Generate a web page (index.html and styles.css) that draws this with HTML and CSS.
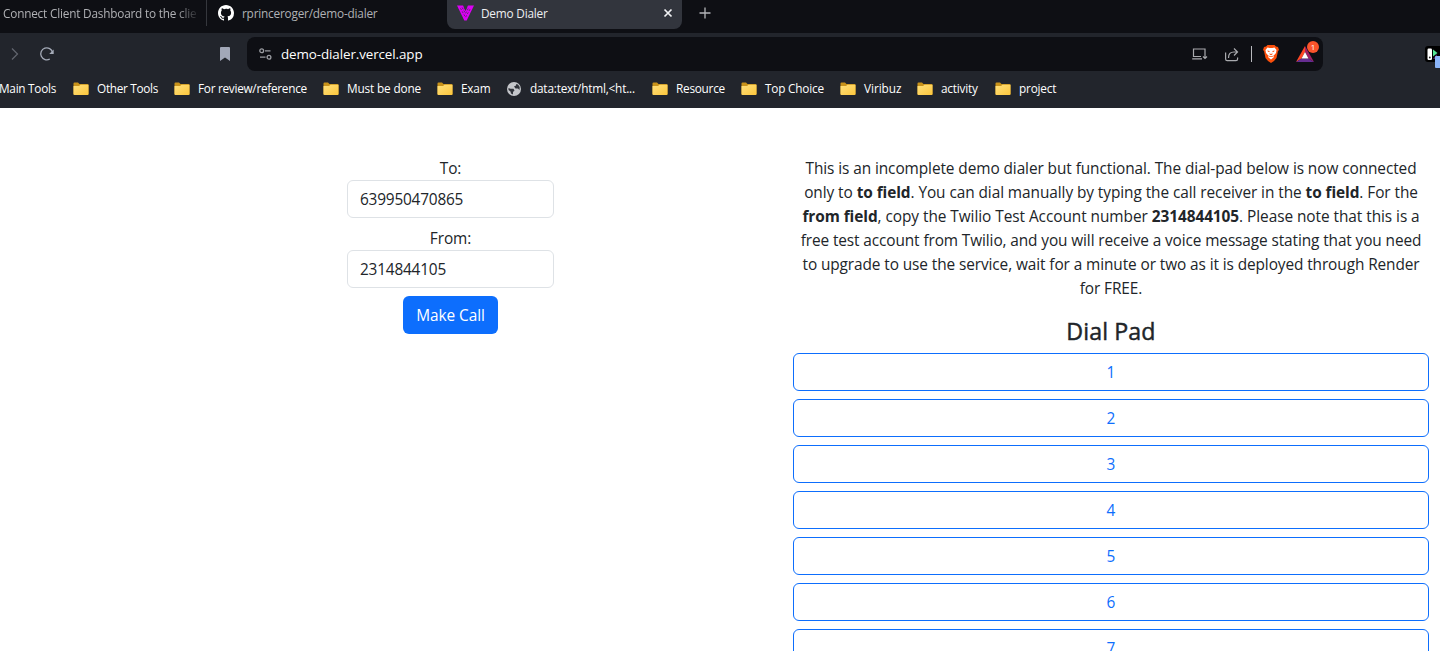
FILE: index.html
```html
<!DOCTYPE html>
<html lang="en">
<head>
<meta charset="utf-8">
<title>Demo Dialer</title>
<link rel="stylesheet" href="styles.css">
</head>
<body>
<svg class="defs" width="0" height="0">
  <defs>
    <linearGradient id="gold" x1="0" y1="0" x2="1" y2="1"><stop offset="0" stop-color="#ffe07c"/><stop offset="1" stop-color="#fcc63c"/></linearGradient>
    <symbol id="folder" viewBox="0 0 16 14"><path d="M.5 1.500Q.5.5 1.500.5H5L6.500 2H14.500Q15.500 2 15.500 3V12.500H.5Z" fill="#c8921a"/><path d="M.5 4H6L7.500 2.800H15.500V12Q15.500 13 14.500 13H1.500Q.5 13 .5 12Z" fill="url(#gold)"/></symbol>
  </defs>
</svg>
<header class="browser">
  <div class="tabs">
    <div class="tab tab-first"><span class="t-connect">Connect Client Dashboard to the clie</span></div>
    <div class="tab tab-github">
      <svg width="16" height="16" viewBox="0 0 16 16"><path fill="#fff" d="M8 0C3.580 0 0 3.580 0 8c0 3.540 2.290 6.530 5.470 7.590.4.070.55-.17.55-.38 0-.19-.01-.82-.01-1.490-2.010.37-2.530-.49-2.690-.94-.09-.23-.48-.94-.82-1.130-.28-.15-.68-.52-.01-.53.63-.01 1.080.58 1.230.82.72 1.210 1.870.87 2.330.66.070-.52.28-.87.510-1.070-1.780-.2-3.640-.89-3.640-3.950 0-.87.310-1.590.82-2.150-.08-.2-.36-1.020.08-2.120 0 0 .67-.21 2.200.82A7.600 7.600 0 0 1 8 3.860c.68 0 1.360.09 2 .27 1.530-1.040 2.200-.82 2.200-.82.44 1.100.16 1.920.08 2.120.51.56.82 1.270.82 2.150 0 3.070-1.870 3.750-3.650 3.950.29.25.54.73.54 1.480 0 1.070-.01 1.930-.01 2.200 0 .21.150.46.55.38A8.010 8.010 0 0 0 16 8c0-4.420-3.580-8-8-8Z"/></svg>
      <span class="t-github">rprinceroger/demo-dialer</span>
    </div>
    <div class="tab tab-active">
      <svg width="17" height="16" viewBox="0 0 17 16"><path d="M0 .5H17L9.700 15.500H7.300Z" fill="#dc00f5"/><path d="M6 0 7.200 3.500 8.500 6 9.800 3.500 11 0Z" fill="#32353d"/><path d="M3.500 3.300 8.500 12.300 13.500 3.300M5.200 2.500 8.500 8.500 11.800 2.500" fill="none" stroke="#32353d" stroke-width=".7" stroke-dasharray="2 1.500"/></svg>
      <span class="t-demo">Demo Dialer</span>
      <svg class="close" width="10" height="10" viewBox="0 0 10 10"><path d="M1.500 1.500 8.500 8.500M8.500 1.500 1.500 8.500" stroke="#f0f1f3" stroke-width="1.700"/></svg>
    </div>
    <svg class="plus" width="12" height="12" viewBox="0 0 12 12"><path d="M6 .5V11.500M.5 6H11.500" stroke="#b4b5b9" stroke-width="1.300"/></svg>
  </div>
  <div class="toolbar">
    <svg class="forward" width="8" height="14" viewBox="0 0 8 14"><path d="M1 1.500 6.500 7 1 12.500" fill="none" stroke="#62666f" stroke-width="1.200"/></svg>
    <svg class="reload" width="16" height="16" viewBox="0 0 16 16"><path d="M10.800 13A6 6 0 1 1 13.600 6.500" fill="none" stroke="#a5abb8" stroke-width="1.300"/><path d="M14.700 3.500V8H10.200Z" fill="#a5abb8"/></svg>
    <svg class="saved" width="10" height="14" viewBox="0 0 10 14"><path d="M0 1Q0 0 1 0H9Q10 0 10 1V14L5 10.500 0 14Z" fill="#a2a8b8"/></svg>
    <div class="address">
      <svg class="tune" width="13" height="12" viewBox="0 0 13 12" fill="none" stroke="#9b9da2" stroke-width="1.300"><circle cx="2.700" cy="2.800" r="1.900"/><path d="M6 2.800H11.500M1 9.200H6.500"/><circle cx="10" cy="9.200" r="1.900"/></svg>
      <span class="url">demo-dialer.vercel.app</span>
      <div class="actions">
        <svg width="16" height="12" viewBox="0 0 16 12" fill="none" stroke="#a9aaae" stroke-width="1.200"><path d="M13 5V1H1.500V8.500H9M.2 10.800H10M13 5V10.500M11 8.500 13 10.500 15 8.500"/></svg>
        <svg class="share" width="15" height="15" viewBox="0 0 15 15" fill="none" stroke="#a9aaae" stroke-width="1.200"><path d="M1.600 5.500V12Q1.600 13.600 3.200 13.600H12Q13.600 13.600 13.600 12V10.500M4.500 11Q4.500 5 10 5H13.500M10 1.500 13.500 5 10 8.500"/></svg>
        <i class="rule"></i>
        <svg class="brave" width="16" height="18" viewBox="0 0 16 18"><path d="M4.500 0H11.500L13 1.500 15 2 16 5 15 6 13.500 13 11 16 8 18 5 16 2.500 13 1 6 0 5 1 2 3 1.500Z" fill="#fb4f0b"/><path d="M4.500 2.500 6.500 3H9.500L11.500 2.500 13.500 5 13 8 11 10.300 11 12 8 14.500 5 12 5 10.300 3 8 2.500 5Z" fill="#fff"/><path d="M4.300 5.500 6.500 6V7L5 6.800ZM11.700 5.500 9.500 6V7L11 6.800ZM7 7.500 6.500 9.300 8 10.300 9.500 9.300 9 7.500 8.700 9H7.300ZM5 10.500 8 11.300 11 10.500V11.200L8 12.100 5 11.200Z" fill="#fb4f0b"/></svg>
        <div class="rewards">
          <svg width="18" height="16" viewBox="0 0 18 16"><path d="M9 0 0 16 5.500 12.500 9 6Z" fill="#ff4724"/><path d="M9 0 18 16 12.500 12.500 9 6Z" fill="#9e1f63"/><path d="M0 16H18L12.500 12.500H5.500Z" fill="#662d91"/><path d="M9 6 5.500 12.500H12.500Z" fill="#fff"/></svg>
          <b class="badge">1</b>
        </div>
      </div>
    </div>
    <svg class="extension" width="15" height="22" viewBox="0 0 15 22"><rect width="18" height="16" rx="3" fill="#000"/><rect x="2.500" y="2.500" width="4.500" height="11.500" rx="1.200" fill="#fff"/><circle cx="4.800" cy="11.500" r=".9" fill="#222"/><path d="M8 3.500 12.500 7 8 10.500Z" fill="#54e596"/><path d="M8 13 12 8V13Z" fill="#51206c"/><rect x="10" y="10" width="8" height="12" rx="1" fill="#8ab4f8"/></svg>
  </div>
  <nav class="bookmarks">
    <a class="mark"><span class="b-main">Main Tools</span></a>
    <a class="mark"><svg><use href="#folder"/></svg><span class="b-other">Other Tools</span></a>
    <a class="mark"><svg><use href="#folder"/></svg><span class="b-review">For review/reference</span></a>
    <a class="mark"><svg><use href="#folder"/></svg><span class="b-must">Must be done</span></a>
    <a class="mark"><svg><use href="#folder"/></svg><span class="b-exam">Exam</span></a>
    <a class="mark"><svg class="globe" viewBox="0 0 16 16"><circle cx="8" cy="8" r="7" fill="#c4c6ca"/><path d="M2.500 7 4.500 7.800H7.500L8.500 9.500 7 11V13.500L5 12.500 4.500 10.500 2.500 9ZM8 2.500 10 3V4.500L8 5.500 9.500 7.500H12L13.500 9 13.700 6 12 3.500Z" fill="#30333a"/></svg><span class="b-data">data:text/html,&lt;ht...</span></a>
    <a class="mark"><svg><use href="#folder"/></svg><span class="b-resource">Resource</span></a>
    <a class="mark"><svg><use href="#folder"/></svg><span class="b-top">Top Choice</span></a>
    <a class="mark"><svg><use href="#folder"/></svg><span class="b-viribuz">Viribuz</span></a>
    <a class="mark"><svg><use href="#folder"/></svg><span class="b-activity">activity</span></a>
    <a class="mark"><svg><use href="#folder"/></svg><span class="b-project">project</span></a>
  </nav>
</header>
<main class="page">
  <form class="call-form">
    <label for="to">To:</label>
    <input id="to" class="field" type="text" value="639950470865">
    <label for="from">From:</label>
    <input id="from" class="field" type="text" value="2314844105">
    <button class="call" type="button">Make Call</button>
  </form>
  <section class="dialer">
    <p class="intro">
      <span class="line l1">This is an incomplete demo dialer but functional. The dial-pad below is now connected</span>
      <span class="line l2">only to <b>to field</b>. You can dial manually by typing the call receiver in the <b>to field</b>. For the</span>
      <span class="line l3"><b>from field</b>, copy the Twilio Test Account number <b>2314844105</b>. Please note that this is a</span>
      <span class="line l4">free test account from Twilio, and you will receive a voice message stating that you need</span>
      <span class="line l5">to upgrade to use the service, wait for a minute or two as it is deployed through Render</span>
      <span class="line l6">for FREE.</span>
    </p>
    <h4 class="heading">Dial Pad</h4>
    <div class="pad">
      <button class="key" type="button">1</button>
      <button class="key" type="button">2</button>
      <button class="key" type="button">3</button>
      <button class="key" type="button">4</button>
      <button class="key" type="button">5</button>
      <button class="key" type="button">6</button>
      <button class="key" type="button">7</button>
    </div>
  </section>
</main>
</body>
</html>
```

FILE: styles.css
```css
* { box-sizing: border-box; }
body { margin: 0; height: 651px; overflow: hidden; background: #fff; color: #212529; font: 15.4px/24px "Open Sans", "Noto Sans", sans-serif; letter-spacing: -.1px; }
svg { display: block; flex: none; }
.defs { position: absolute; }
.browser { height: 108px; background: #22252c; font-size: 11.8px; letter-spacing: -.2px; white-space: nowrap; overflow: hidden; }

.tabs { display: flex; height: 33px; background: #0e0f14; color: #b0b1b5; }
.tab { display: flex; align-items: center; height: 26px; }
.tab span { padding-bottom: 1px; }
.tab-first { width: 207px; padding-left: 3px; border-right: 1px solid #35373d; }
.tab-first span { width: 197px; letter-spacing: -.2px; -webkit-mask-image: linear-gradient(90deg, #000 88%, transparent 100%); mask-image: linear-gradient(90deg, #000 88%, transparent 100%); }
.tab-github { width: 240px; padding-left: 11px; gap: 8px; }
.tab-active { width: 235px; height: 29px; padding: 0 9px 3px 10px; gap: 7px; background: #32353d; border-radius: 0 0 8px 8px; color: #eeeff1; }
.close { margin-left: auto; }
.plus { margin: 7px 0 0 17px; }

.toolbar { display: flex; align-items: center; height: 42px; }
.forward { margin-left: 11px; }
.reload { margin-left: 20px; }
.saved { margin-left: 165px; }
.address { display: flex; align-items: center; width: 1076px; height: 34px; margin-left: 17px; padding: 0 9px 0 12px; border-radius: 8px; background: #0e0f14; color: #fff; font-size: 13.4px; }
.url { margin-left: 9px; letter-spacing: -.1px; }
.actions { display: flex; align-items: center; margin-left: auto; }
.share { margin-left: 16px; }
.rule { width: 1px; height: 16px; margin: 0 11px 0 12px; background: #b8b9bd; }
.rewards { position: relative; margin-left: 17px; }
.badge { position: absolute; left: 11px; top: -5px; width: 12px; height: 12px; border-radius: 50%; background: #fb542b; font: 8px/12px "Open Sans", sans-serif; letter-spacing: 0; text-align: center; }
.extension { margin: 6px 0 0 102px; }

.bookmarks { display: flex; height: 27px; color: #fff; }
.mark { display: flex; align-items: center; flex: none; gap: 8px; width: 101px; }
.mark span { padding-bottom: 2px; }
.mark svg { width: 16px; height: 14px; }
.mark .globe { height: 16px; }
.mark:nth-child(1) { width: 73px; }
.mark:nth-child(3) { width: 149px; }
.mark:nth-child(4) { width: 114px; }
.mark:nth-child(5) { width: 69px; }
.mark:nth-child(6) { width: 146px; }
.mark:nth-child(7) { width: 89px; }
.mark:nth-child(8) { width: 99px; }
.mark:nth-child(9) { width: 77px; }
.mark:nth-child(10) { width: 78px; }
.b-main { margin-left: -1px; letter-spacing: -.27px; }
.b-other { letter-spacing: -.3px; }
.b-review { letter-spacing: -.28px; }
.b-must { letter-spacing: -.15px; }
.b-resource { letter-spacing: -.25px; }
.b-viribuz { letter-spacing: -.05px; }

.page { display: grid; grid-template-columns: 207px 636px; column-gap: 239px; padding: 48px 0 0 347px; }
.call-form { display: flex; flex-direction: column; align-items: center; }
.call-form label { height: 24px; line-height: 26px; }
.field { width: 207px; height: 38px; margin-bottom: 8px; padding: 1px 12px 0; border: 1px solid #dee2e6; border-radius: 6px; background: #fff; color: #212529; font: inherit; letter-spacing: -.2px; }
.call { width: 95px; height: 38px; padding: 2px 0 0; border: 0; border-radius: 6px; background: #0d6efd; color: #fff; font: inherit; letter-spacing: -.05px; white-space: nowrap; }
.dialer { text-align: center; }
.intro { margin: 0 0 15px; padding-top: 1px; }
.line { display: block; white-space: nowrap; }
.l1 { letter-spacing: -.08px; }
.l2 { letter-spacing: -.07px; }
.l3 { letter-spacing: -.055px; }
.l4 { letter-spacing: -.105px; }
.l5 { letter-spacing: -.095px; }
.heading { margin: 0 0 7px; padding-top: 1px; font-size: 23.2px; font-weight: 500; line-height: 29px; letter-spacing: .1px; -webkit-text-stroke: .45px #212529; }
.pad { display: grid; gap: 8px; }
.key { height: 38px; padding: 2px 0 0; border: 1px solid #0d6efd; border-radius: 6px; background: #fff; color: #0d6efd; font: inherit; }
```
